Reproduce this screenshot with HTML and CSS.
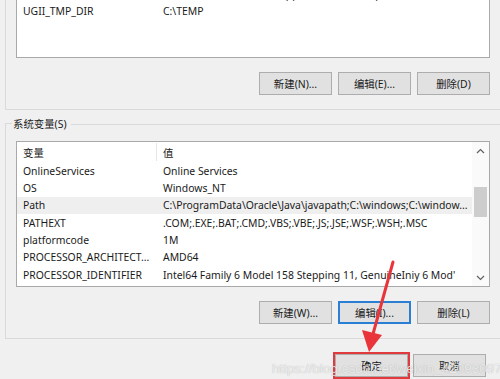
FILE: index.html
```html
<!DOCTYPE html>
<html lang="zh-CN">
<head>
<meta charset="utf-8">
<title>环境变量</title>
<link rel="stylesheet" href="styles.css">
</head>
<body>
<div class="window">
  <div class="group group-user">
    <div class="list list-user">
      <div class="row"><span class="name">TEMP</span><span class="val">C:\Users\Administrator\AppData\Local\Temp</span></div>
      <div class="row"><span class="name">UGII_TMP_DIR</span><span class="val">C:\TEMP</span></div>
    </div>
    <div class="buttons">
      <button class="btn">新建(N)...</button>
      <button class="btn">编辑(E)...</button>
      <button class="btn">删除(D)</button>
    </div>
  </div>

  <div class="group-sys">
    <div class="legend"><span class="legend-text">系统变量(S)</span></div>
    <div class="group-body">
      <div class="list list-sys">
        <div class="table">
          <div class="row head"><span class="name">变量</span><span class="val">值</span></div>
          <div class="row"><span class="name">OnlineServices</span><span class="val">Online Services</span></div>
          <div class="row"><span class="name">OS</span><span class="val">Windows_NT</span></div>
          <div class="row selected"><span class="name">Path</span><span class="val">C:\ProgramData\Oracle\Java\javapath;C:\windows;C:\window...</span></div>
          <div class="row"><span class="name">PATHEXT</span><span class="val">.COM;.EXE;.BAT;.CMD;.VBS;.VBE;.JS;.JSE;.WSF;.WSH;.MSC</span></div>
          <div class="row"><span class="name">platformcode</span><span class="val">1M</span></div>
          <div class="row"><span class="name">PROCESSOR_ARCHITECT...</span><span class="val">AMD64</span></div>
          <div class="row"><span class="name">PROCESSOR_IDENTIFIER</span><span class="val">Intel64 Family 6 Model 158 Stepping 11, GenuineIniy 6 Mod'</span></div>
        </div>
        <div class="scrollbar">
          <div class="sb-arrow">
            <svg width="9" height="6" viewBox="0 0 9 6"><polyline points="1,5 4.5,1.5 8,5" fill="none" stroke="#606060" stroke-width="1.2"/></svg>
          </div>
          <div class="sb-track"><div class="sb-thumb"></div></div>
          <div class="sb-arrow">
            <svg width="9" height="6" viewBox="0 0 9 6"><polyline points="1,1 4.5,4.5 8,1" fill="none" stroke="#606060" stroke-width="1.2"/></svg>
          </div>
        </div>
      </div>
      <div class="buttons">
        <button class="btn">新建(W)...</button>
        <button class="btn focused">编辑(I)...</button>
        <button class="btn">删除(L)</button>
      </div>
    </div>
  </div>

  <div class="dialog-buttons">
    <button class="btn ok">确定</button>
    <button class="btn">取消</button>
  </div>

  <svg class="red-arrow" width="500" height="379" viewBox="0 0 500 379">
    <line x1="393" y1="262" x2="373" y2="334" stroke="#e8343a" stroke-width="3" stroke-linecap="round"/>
    <polygon points="369,352 362,330 382,335" fill="#e8343a"/>
  </svg>
  <div class="watermark">https://blog.csdn.net/weixin_42093097</div>
</div>
</body>
</html>
```

FILE: styles.css
```css
* { box-sizing: border-box; }

html, body {
  margin: 0;
  padding: 0;
  background: #f0f0f0;
}

.window {
  position: relative;
  width: 500px;
  height: 379px;
  overflow: hidden;
  background: #f0f0f0;
  font-family: "Noto Sans", "Noto Sans CJK SC", sans-serif;
  font-size: 10.4px;
  color: #1a1a1a;
  display: flex;
  flex-direction: column;
}

.group-user {
  margin-left: 5px;
  width: 520px;
  border-left: 1px solid #dadada;
  border-bottom: 1px solid #dadada;
  padding: 0 0 14px 10px;
}

.list {
  width: 474px;
  background: #fff;
  border: 1px solid #a9a9a9;
}

.list-user {
  margin-top: -16px;
  height: 74px;
}

.row {
  display: flex;
  height: 17.33px;
  align-items: center;
  white-space: nowrap;
}

.name {
  width: 140px;
  padding-left: 6px;
  flex: none;
  overflow: hidden;
}

.val {
  padding-left: 6px;
  overflow: hidden;
  flex: 1;
  min-width: 0;
}

.buttons {
  width: 474px;
  display: flex;
  justify-content: flex-end;
  gap: 6px;
  margin-top: 14px;
}

.btn {
  width: 73px;
  height: 23px;
  padding: 0;
  background: #e1e1e1;
  border: 1px solid #adadad;
  font-family: "Noto Sans", "Noto Sans CJK SC", sans-serif;
  font-size: 10.4px;
  color: #1a1a1a;
}

.btn.focused {
  border: 2px solid #2a7fd4;
}

/* system group */
.group-sys {
  margin-top: 6px;
  margin-left: 5px;
  width: 520px;
}

.legend {
  display: flex;
  height: 16px;
  align-items: center;
}

.legend::before {
  content: "";
  align-self: flex-end;
  width: 6px;
  height: 8px;
  border-top: 1px solid #dadada;
  border-left: 1px solid #dadada;
}

.legend::after {
  content: "";
  flex: 1;
  height: 1px;
  background: #dadada;
}

.legend-text {
  padding: 0 4px 0 1px;
  line-height: 16px;
}

.group-body {
  border-left: 1px solid #dadada;
  border-bottom: 1px solid #dadada;
  padding: 9px 0 14px 10px;
}

.list-sys {
  height: 146px;
  display: flex;
}

.table {
  flex: 1;
  min-width: 0;
}

.row.head {
  height: 20px;
}

.row.head .name {
  height: 18px;
  display: flex;
  align-items: center;
  border-right: 1px solid #e5e5e5;
}

.row.selected {
  background: #efefef;
}

.scrollbar {
  width: 17px;
  flex: none;
  display: flex;
  flex-direction: column;
  background: #fafafa;
}

.sb-arrow {
  height: 17px;
  display: flex;
  align-items: center;
  justify-content: center;
}

.sb-track {
  flex: 1;
  padding: 28px 2px 0 2px;
}

.sb-thumb {
  height: 30px;
  background: #cdcdcd;
}

.dialog-buttons {
  display: flex;
  justify-content: flex-end;
  gap: 5px;
  margin-top: 15px;
  padding-right: 14px;
}

.btn.ok {
  outline: 2px solid #e03a3e;
  outline-offset: 0;
}

.red-arrow {
  position: absolute;
  left: 0;
  top: 0;
  pointer-events: none;
}

.watermark {
  position: absolute;
  left: 272px;
  top: 361px;
  font-family: "Liberation Sans", sans-serif;
  font-size: 13.5px;
  color: rgba(255, 255, 255, 0.75);
  text-shadow: 0 0 1px rgba(120, 120, 120, 0.6);
  white-space: nowrap;
  pointer-events: none;
}
```
